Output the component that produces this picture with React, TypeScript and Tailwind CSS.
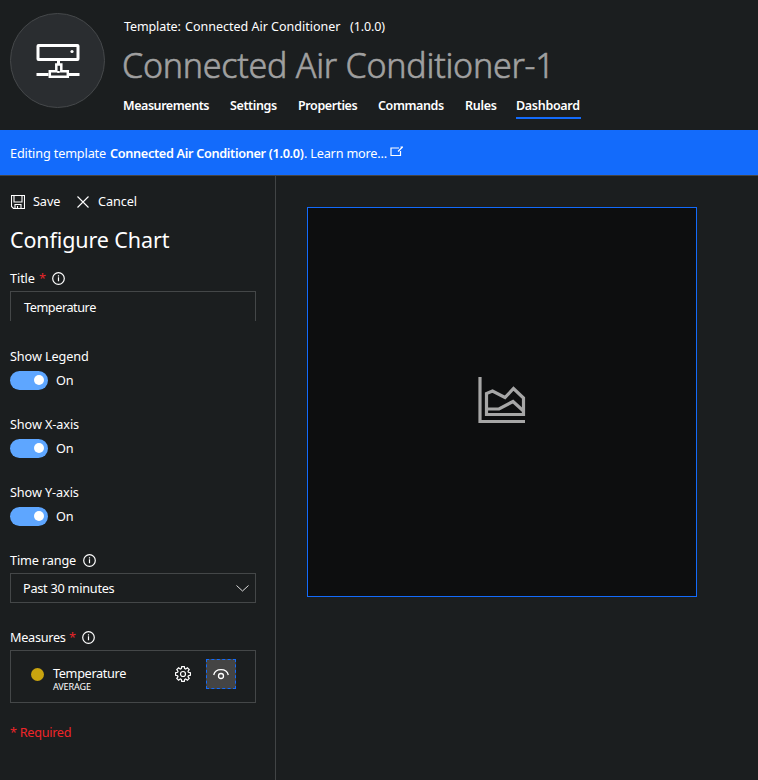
import React from "react";

const tabs = [
  { label: "Measurements", cls: "w-[86px] mr-[21px] tracking-[-0.45px]" },
  { label: "Settings", cls: "w-[47px] mr-[21px] tracking-[-0.4px]" },
  { label: "Properties", cls: "w-[60px] mr-[20px] tracking-[-0.4px]" },
  { label: "Commands", cls: "w-[67px] mr-[20px] tracking-[-0.4px]" },
  { label: "Rules", cls: "w-[32px] mr-[19px] tracking-[-0.3px]" },
  { label: "Dashboard", cls: "w-[65px] border-b-2 border-[#136bfb] tracking-[-0.3px]" },
];

function Info() {
  return (
    <svg className="mb-[2px]" width="13" height="13" viewBox="0 0 13 13" fill="none" stroke="#fff" strokeWidth="1.2">
      <circle cx="6.5" cy="6.5" r="5.8" />
      <path d="M6.5 5.3v4M6.5 3.2v1.2" />
    </svg>
  );
}

function Toggle({ label }: { label: string }) {
  return (
    <div className="h-[68px]">
      <div className="h-5 leading-5">{label}</div>
      <div className="mt-[5px] flex items-center">
        <div className="flex h-[19px] w-[38px] items-start justify-end rounded-full bg-[#5ea6ff] pr-[4px] pt-[4px]">
          <div className="size-[10px] rounded-full bg-white" />
        </div>
        <span className="ml-2 leading-[19px]">On</span>
      </div>
    </div>
  );
}

export default function App() {
  return (
    <div className="flex h-[780px] w-full flex-col overflow-hidden whitespace-nowrap bg-[#1b1e1f] font-['Noto_Sans','Open_Sans',sans-serif] text-[12.7px] tracking-[-0.1px] text-white">
      <header className="flex h-[130px] shrink-0 pl-[10px]">
        <div className="mt-[13px] flex size-[95px] shrink-0 items-center justify-center rounded-full border border-[#45484a] bg-[#2a2d30]">
          <svg width="45" height="37" viewBox="-1 -1 45 37" fill="none" stroke="#fff" strokeWidth="3">
            <rect x="2" y="2.500" width="40" height="14" rx="0.5" />
            <path d="M22.500 18v3M.5 31.500h12M32.500 31.500h11" />
            <path strokeWidth="2.500" d="M22.500 21.500h-2.200v6.700h-6.500v5.500h18v-5.500h-6.500v-6.700zM22.500 28v2" />
            <circle cx="36" cy="8.500" r="1.600" fill="#fff" stroke="none" />
          </svg>
        </div>
        <div className="ml-[19px] flex flex-col">
          <div className="mt-[17px] flex h-5 text-[12.5px] leading-5 tracking-normal">
            <span className="w-[61px] tracking-[-0.1px]">Template:</span>
            <span className="w-[165px]">Connected Air Conditioner</span>
            <span className="tracking-[-0.1px]">(1.0.0)</span>
          </div>
          <h1 className="ml-[-2px] mt-[5px] h-[47px] text-[34px] font-light leading-[46px] tracking-[-0.25px] text-[#a0a0a0] [-webkit-text-stroke:0.6px_#a0a0a0]">Connected Air Conditioner-1</h1>
          <nav className="ml-[-1px] mt-[6px] flex text-[12.5px] font-semibold">
            {tabs.map((t) => (
              <div key={t.label} className={"h-[24px] leading-[22px] " + t.cls}>{t.label}</div>
            ))}
          </nav>
        </div>
      </header>
      <div className="flex h-[46px] shrink-0 items-center border-b border-[#444] bg-[#136bfb] pl-[10px] pt-[2px]">
        <span className="w-[100px] tracking-[-0.15px]">Editing template</span>
        <span className="w-[194px] font-semibold tracking-[-0.32px]">Connected Air Conditioner (1.0.0)</span>
        <span className="w-[85px] tracking-[-0.2px]">. Learn more...</span>
        <svg className="mb-[5px] ml-[1px]" width="14" height="11" viewBox="0 0 14 11" fill="none" stroke="#fff" strokeWidth="1.2">
          <path d="M9 2H1v7.500h9.500V5M8 5.500L12.500 1M10.500 1H13" />
        </svg>
      </div>
      <div className="flex min-h-0 flex-1">
        <aside className="w-[276px] shrink-0 border-r border-[#414445] pl-[10px]">
          <div className="mt-[16px] flex h-5 items-center">
            <svg className="ml-[1px]" width="14" height="14" viewBox="0 0 14 14" fill="none" stroke="#fff" strokeWidth="1.1">
              <path d="M.5.5h13v13H2.500L.5 11.500zM3 1v6h8V1M4 13V9.500h6V13M6.500 11v2" />
            </svg>
            <span className="ml-[8px] w-[44px]">Save</span>
            <svg width="12" height="12" viewBox="0 0 12 12" stroke="#fff" strokeWidth="1.1"><path d="M.5.5l11 11M11.500.5L.5 11.500" /></svg>
            <span className="ml-[9px]">Cancel</span>
          </div>
          <h2 className="mt-[12px] h-8 text-[21.5px] leading-8 tracking-[-0.12px]">Configure Chart</h2>
          <div className="mt-[13px] flex h-5 items-center">
            <span className="w-[29px]">Title</span><span className="w-[13px] text-[#e8252a]">*</span><Info />
          </div>
          <div className="mt-[2px] h-[30px] w-[246px] border border-b-0 border-[#444748] pl-[13px] leading-[31px] tracking-[-0.45px]">Temperature</div>
          <div className="mt-[25px]">
            <Toggle label="Show Legend" />
            <Toggle label="Show X-axis" />
            <Toggle label="Show Y-axis" />
          </div>
          <div className="mt-px flex h-5 items-center">
            <span className="w-[73px] tracking-[-0.15px]">Time range</span><Info />
          </div>
          <div className="mt-[2px] flex h-[30px] w-[246px] items-center justify-between border border-[#444748] pl-[12px] pr-[6px]">
            <span className="mt-px tracking-[-0.25px]">Past 30 minutes</span>
            <svg width="13" height="7" viewBox="0 0 13 7" fill="none" stroke="#ddd"><path d="M.5.5l6 5.500 6-5.500" /></svg>
          </div>
          <div className="mt-[25px] flex h-5 items-center">
            <span className="w-[59px] tracking-[-0.3px]">Measures</span><span className="w-[13px] text-[#e8252a]">*</span><Info />
          </div>
          <div className="mt-[2px] flex h-[53px] w-[246px] border border-[#444748] pl-[20px]">
            <div className="mt-[17px] size-[13px] rounded-full bg-[#c9a40f]" />
            <div className="ml-[9px] mt-[14px] w-[122px]">
              <div className="h-[17px] leading-[17px] tracking-[-0.35px]">Temperature</div>
              <div className="h-[10px] text-[9px] leading-[10px]">AVERAGE</div>
            </div>
            <svg className="mt-[15px]" width="16" height="16" viewBox="0 0 16 16" fill="none" stroke="#fff" strokeWidth="1.2">
              <path d="M6.700.6h2.600l.4 2 1 .4 1.700-1.200 1.800 1.800L13 5.300l.4 1 2 .4v2.600l-2 .4-.4 1 1.200 1.700-1.800 1.800-1.700-1.200-1 .4-.4 2H6.700l-.4-2-1-.4-1.700 1.200-1.800-1.800L3 10.700l-.4-1-2-.4V6.700l2-.4.4-1L1.800 3.600l1.800-1.800L5.300 3l1-.4z" />
              <circle cx="8" cy="8" r="2.500" />
            </svg>
            <div className="ml-[15px] mt-[8px] flex size-[30px] items-center justify-center border border-dashed border-[#136bfb] bg-[#444]">
              <svg width="16" height="12" viewBox="0 0 16 12" fill="none" stroke="#fff" strokeWidth="1.3">
                <path d="M.7 7C1.500 3.500 4.300 1.600 8 1.600S14.500 3.500 15.300 7" /><circle cx="8" cy="8" r="2.500" />
              </svg>
            </div>
          </div>
          <div className="mt-[19px] h-5 leading-5 tracking-[-0.3px] text-[#ee2529]">* Required</div>
        </aside>
        <main className="flex-1 pl-[31px] pt-[31px]">
          <div className="flex size-[390px] items-center justify-center border border-[#136bfb] bg-[#0d0e0f]">
            <svg className="mt-[-4px]" width="48" height="48" viewBox="0 0 48 48" fill="none" stroke="#a6a6a6" strokeWidth="3.200">
              <path d="M2 1v44.500h45" />
              <path d="M8.500 38.500V17.500l6-2.500 12.500 6.500 8.500-9L45.500 22v16.500z" />
              <path d="M9 33h12l14-7.500L46 35.500" />
            </svg>
          </div>
        </main>
      </div>
    </div>
  );
}
